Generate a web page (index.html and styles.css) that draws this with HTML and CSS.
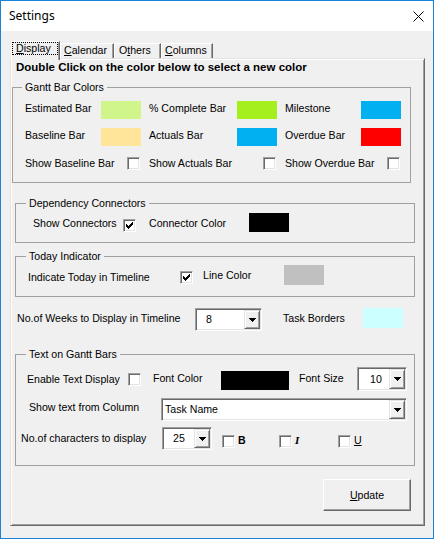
FILE: index.html
```html
<!DOCTYPE html>
<html lang="en">
<head>
<meta charset="utf-8">
<title>Settings</title>
<link rel="stylesheet" href="styles.css">
</head>
<body>
<div class="window">
  <header class="titlebar">
    <span class="title">Settings</span>
    <svg class="close" width="11" height="11" viewBox="0 0 11 11" aria-label="Close"><path d="M0.5 0.5L10.5 10.5M10.5 0.5L0.5 10.5" stroke="#000" stroke-width="1" fill="none"/></svg>
  </header>
  <main class="client">
    <nav class="tabs">
      <div class="tab tab-active"><span class="tab-focus"><u>D</u>isplay</span></div>
      <div class="tab tab-calendar"><u>C</u>alendar</div>
      <div class="tab tab-others">O<u>t</u>hers</div>
      <div class="tab tab-columns"><u>C</u>olumns</div>
    </nav>
    <section class="page">
      <div class="heading">Double Click on the color below to select a new color</div>

      <fieldset class="group group-colors">
        <legend>Gantt Bar Colors</legend>
        <div class="color-row">
          <span class="lbl">Estimated Bar</span><span class="swatch sw-estimated"></span>
          <span class="lbl">% Complete Bar</span><span class="swatch sw-complete"></span>
          <span class="lbl">Milestone</span><span class="swatch sw-milestone"></span>
        </div>
        <div class="color-row">
          <span class="lbl">Baseline Bar</span><span class="swatch sw-baseline"></span>
          <span class="lbl">Actuals Bar</span><span class="swatch sw-actuals"></span>
          <span class="lbl">Overdue Bar</span><span class="swatch sw-overdue"></span>
        </div>
        <div class="color-row show-row">
          <span class="lbl">Show Baseline Bar</span><span class="cb"></span>
          <span class="lbl">Show Actuals Bar</span><span class="cb"></span>
          <span class="lbl">Show Overdue Bar</span><span class="cb"></span>
        </div>
      </fieldset>

      <fieldset class="group group-deps">
        <legend>Dependency Connectors</legend>
        <div class="deps-row">
          <span class="lbl">Show Connectors</span>
          <span class="cb cb-checked"><svg width="7" height="7" viewBox="0 0 7 7"><path d="M6 0h1v1h-1z M5 1h2v1h-2z M0 2h1v1h-1z M4 2h3v1h-3z M0 3h2v1h-2z M3 3h3v1h-3z M0 4h5v1h-5z M1 5h3v1h-3z M2 6h1v1h-1z" fill="#000" shape-rendering="crispEdges"/></svg></span>
          <span class="lbl">Connector Color</span>
          <span class="swatch sw-connector"></span>
        </div>
      </fieldset>

      <fieldset class="group group-today">
        <legend>Today Indicator</legend>
        <div class="today-row">
          <span class="lbl lbl-low">Indicate Today in Timeline</span>
          <span class="cb cb-checked cb-low"><svg width="7" height="7" viewBox="0 0 7 7"><path d="M6 0h1v1h-1z M5 1h2v1h-2z M0 2h1v1h-1z M4 2h3v1h-3z M0 3h2v1h-2z M3 3h3v1h-3z M0 4h5v1h-5z M1 5h3v1h-3z M2 6h1v1h-1z" fill="#000" shape-rendering="crispEdges"/></svg></span>
          <span class="lbl lbl-mid">Line Color</span>
          <span class="swatch sw-line"></span>
        </div>
      </fieldset>

      <div class="weeks-row">
        <span class="lbl">No.of Weeks to Display in Timeline</span>
        <div class="combo combo-weeks">
          <span class="combo-value">8</span>
          <span class="combo-btn"><svg width="7" height="4" viewBox="0 0 7 4"><path d="M0 0h7v1h-1v1h-1v1h-1v1h-1v-1h-1v-1h-1v-1h-1z" fill="#000" shape-rendering="crispEdges"/></svg></span>
        </div>
        <span class="lbl">Task Borders</span>
        <span class="swatch sw-borders"></span>
      </div>

      <fieldset class="group group-text">
        <legend>Text on Gantt Bars</legend>
        <div class="text-row1">
          <span class="lbl lbl-low">Enable Text Display</span>
          <span class="cb cb-low"></span>
          <span class="lbl lbl-mid">Font Color</span>
          <span class="swatch sw-font"></span>
          <span class="lbl lbl-mid">Font Size</span>
          <div class="combo combo-size">
            <span class="combo-value">10</span>
            <span class="combo-btn"><svg width="7" height="4" viewBox="0 0 7 4"><path d="M0 0h7v1h-1v1h-1v1h-1v1h-1v-1h-1v-1h-1v-1h-1z" fill="#000" shape-rendering="crispEdges"/></svg></span>
          </div>
        </div>
        <div class="text-row2">
          <span class="lbl">Show text from Column</span>
          <div class="combo combo-column">
            <span class="combo-value">Task Name</span>
            <span class="combo-btn"><svg width="7" height="4" viewBox="0 0 7 4"><path d="M0 0h7v1h-1v1h-1v1h-1v1h-1v-1h-1v-1h-1v-1h-1z" fill="#000" shape-rendering="crispEdges"/></svg></span>
          </div>
        </div>
        <div class="text-row3">
          <span class="lbl">No.of characters to display</span>
          <div class="combo combo-chars">
            <span class="combo-value">25</span>
            <span class="combo-btn"><svg width="7" height="4" viewBox="0 0 7 4"><path d="M0 0h7v1h-1v1h-1v1h-1v1h-1v-1h-1v-1h-1v-1h-1z" fill="#000" shape-rendering="crispEdges"/></svg></span>
          </div>
          <span class="opt"><span class="cb"></span><span class="opt-lbl opt-bold">B</span></span>
          <span class="opt"><span class="cb"></span><span class="opt-lbl opt-italic">I</span></span>
          <span class="opt"><span class="cb"></span><span class="opt-lbl opt-under">U</span></span>
        </div>
      </fieldset>

      <div class="btn-row">
        <button class="btn" type="button"><u>U</u>pdate</button>
      </div>
    </section>
  </main>
</div>
</body>
</html>
```

FILE: styles.css
```css
* { box-sizing: border-box; }
html, body { margin: 0; }
body {
  font-family: "Liberation Sans", Arial, sans-serif;
  font-size: 10.6px;
  color: #000;
  background: #fff;
}

.window {
  width: 434px;
  height: 539px;
  border: 1px solid #1883d7;
  background: #f0f0f0;
  display: flex;
  flex-direction: column;
  overflow: hidden;
}

.titlebar {
  flex: none;
  height: 30px;
  background: #fff;
  display: flex;
  align-items: center;
  justify-content: space-between;
  padding: 0 9px 0 8px;
}
.title {
  font-family: "Noto Sans", "Liberation Sans", sans-serif;
  font-size: 12px;
  line-height: 16px;
}
.close { display: block; }

.client {
  flex: 1;
  padding: 10px 0 0 9px;
}

/* tabs */
.tabs {
  display: flex;
  align-items: flex-end;
  height: 17px;
  margin-left: 1px;
}
.tab {
  flex: none;
  height: 15px;
  border: 1px solid;
  border-bottom: 0;
  border-color: #fff #696969 #696969 #fff;
  box-shadow: inset -1px 0 #a0a0a0;
  padding-left: 3px;
  line-height: 13px;
  white-space: nowrap;
  background: #f0f0f0;
}
.tab-active {
  width: 49px;
  height: 19px;
  margin-bottom: -2px;
  position: relative;
  z-index: 1;
  padding-left: 0;
}
.tab-focus {
  display: block;
  width: 46px;
  height: 13px;
  border: 1px dotted #000;
  padding-left: 3px;
  line-height: 11px;
}
.tab-calendar { width: 54px; }
.tab-others { width: 47px; padding-left: 4px; }
.tab-columns { width: 52px; }

/* page */
.page {
  width: 415px;
  height: 468px;
  border: 1px solid;
  border-color: #e3e3e3 #696969 #696969 #e3e3e3;
  box-shadow: inset 1px 1px #fff, inset -1px -1px #a0a0a0;
  padding: 1px;
}
.heading {
  font-weight: bold;
  font-size: 11.5px;
  line-height: 14px;
  padding-left: 4px;
  white-space: nowrap;
}

/* group boxes */
.group {
  margin: 0;
  padding: 0;
  border: 1px solid #a0a0a0;
  min-width: 0;
}
.group > legend {
  padding: 0 3px;
  line-height: 13px;
  margin-left: 10px;
}
.group-colors {
  width: 399px;
  margin-top: 7px;
  padding: 7px 0 12px;
}
.group-colors > legend { margin-left: 9px; }
.group-deps, .group-today, .group-text {
  width: 400px;
  margin-left: 3px;
}
.group-deps { margin-top: 14px; padding: 3px 0 10px; }
.group-today { margin-top: 7px; padding: 2px 0 11px; }
.group-text { margin-top: 17px; padding: 6px 0 15px; }

.lbl {
  line-height: 13px;
  white-space: nowrap;
}
.lbl-low { margin-top: 6px; }
.lbl-mid { margin-top: 4px; }

.swatch { display: block; width: 40px; height: 18px; }
.sw-estimated { background: #d0f58b; }
.sw-complete { background: #a5ef1f; }
.sw-milestone { background: #00b0f0; }
.sw-baseline { background: #ffe599; }
.sw-actuals { background: #00b0f0; }
.sw-overdue { background: #ff0000; }
.sw-connector { background: #000; height: 19px; }
.sw-line { background: #c0c0c0; height: 20px; }
.sw-borders { background: #ccffff; height: 20px; }
.sw-font { background: #000; width: 68px; height: 19px; margin-top: 4px; }

/* checkbox */
.cb {
  display: block;
  flex: none;
  width: 13px;
  height: 13px;
  border: 1px solid;
  border-color: #a0a0a0 #fff #fff #a0a0a0;
  box-shadow: inset 1px 1px #696969, inset -1px -1px #e3e3e3;
  background: #fff;
}
.cb svg { display: block; margin: 2px 0 0 2px; }
.cb-low { margin-top: 6px; }

/* rows */
.color-row {
  display: grid;
  grid-template-columns: 76px 48px 88px 48px 76px 40px;
  align-items: start;
  height: 18px;
  margin-left: 12px;
}
.color-row + .color-row { margin-top: 9px; }
.color-row > .lbl { margin-top: 1px; }
.show-row { height: 13px; margin-top: 11px !important; }
.show-row > .lbl { margin-top: 0; }
.show-row > .cb { margin-left: 26px; }

.deps-row {
  display: grid;
  grid-template-columns: 90px 26px 100px 40px;
  align-items: start;
  height: 19px;
  padding-left: 17px;
}
.deps-row > .lbl { margin-top: 4px; }
.deps-row > .cb { margin-top: 6px; }

.today-row {
  display: grid;
  grid-template-columns: 152px 23px 81px 40px;
  align-items: start;
  height: 20px;
  padding-left: 12px;
}

.weeks-row {
  display: grid;
  grid-template-columns: 178px 88px 80px 40px;
  align-items: start;
  height: 23px;
  margin-top: 11px;
  padding-left: 5px;
}
.weeks-row > .lbl { margin-top: 4px; }

/* combo */
.combo {
  display: flex;
  height: 23px;
  border: 1px solid;
  border-color: #a0a0a0 #fff #fff #a0a0a0;
  box-shadow: inset 1px 1px #696969, inset -1px -1px #e3e3e3;
  background: #fff;
  padding: 1px;
}
.combo-value {
  flex: 1;
  line-height: 19px;
  padding-left: 9px;
  white-space: nowrap;
  overflow: hidden;
}
.combo-btn {
  flex: none;
  width: 16px;
  border: 1px solid;
  border-color: #e3e3e3 #696969 #696969 #e3e3e3;
  box-shadow: inset 1px 1px #fff, inset -1px -1px #a0a0a0;
  background: #f0f0f0;
  display: flex;
  align-items: center;
  justify-content: center;
}
.combo-btn svg { display: block; }
.combo-weeks { width: 67px; }
.combo-size { width: 50px; height: 24px; }
.combo-size .combo-value { line-height: 20px; padding-left: 11px; }
.combo-column { width: 246px; }
.combo-column .combo-value { padding-left: 2px; }
.combo-chars { width: 50px; }

.text-row1 {
  display: grid;
  grid-template-columns: 101px 25px 68px 78px 58px 50px;
  align-items: start;
  height: 24px;
  padding-left: 11px;
}
.text-row1 > .lbl-mid { margin-top: 5px; }
.text-row2 {
  display: grid;
  grid-template-columns: 132px 246px;
  align-items: start;
  height: 23px;
  margin-top: 7px;
  padding-left: 13px;
}
.text-row2 > .lbl { margin-top: 3px; }
.text-row3 {
  display: grid;
  grid-template-columns: 141px 60px 57px 59px auto;
  align-items: start;
  height: 23px;
  margin-top: 6px;
  padding-left: 5px;
}
.text-row3 > .lbl { margin-top: 5px; }
.opt { display: flex; align-items: flex-start; }
.opt > .cb { margin-top: 8px; }
.opt-lbl { line-height: 13px; margin: 7px 0 0 3px; }
.opt-bold { font-weight: bold; }
.opt-italic { font-family: "Liberation Serif", serif; font-weight: bold; font-style: italic; font-size: 11px; }
.opt-under { text-decoration: underline; }

/* button */
.btn-row {
  display: flex;
  justify-content: flex-end;
  margin-top: 13px;
  padding-right: 12px;
}
.btn {
  width: 88px;
  height: 32px;
  border: 1px solid;
  border-color: #fff #696969 #696969 #fff;
  box-shadow: inset -1px -1px #a0a0a0;
  background: #f0f0f0;
  font: inherit;
  color: #000;
  padding: 0;
  line-height: 13px;
}
```
